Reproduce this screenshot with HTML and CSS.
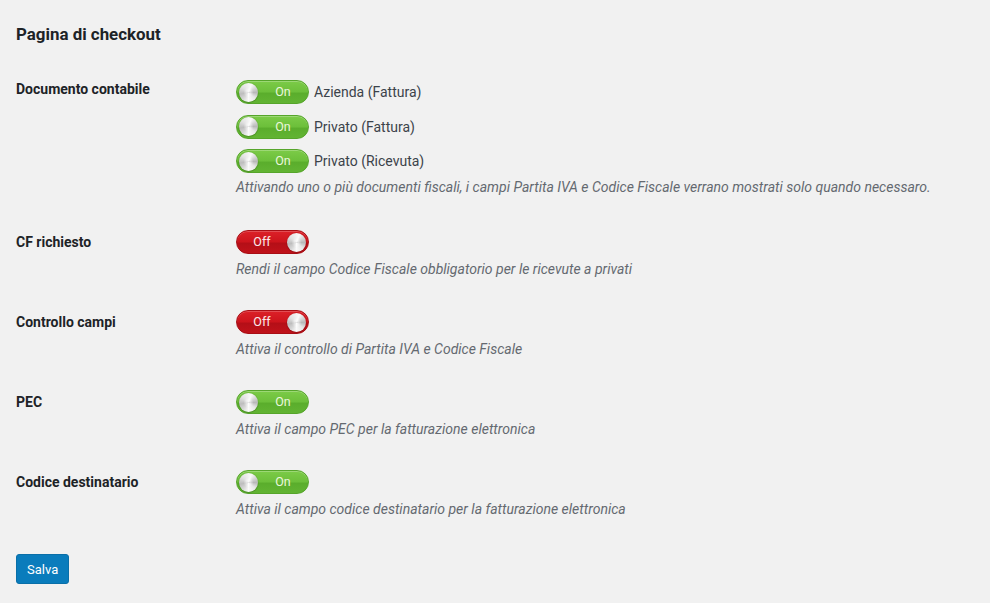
FILE: index.html
```html
<!DOCTYPE html>
<html lang="it">
<head>
<meta charset="utf-8">
<title>Pagina di checkout</title>
<link rel="stylesheet" href="styles.css">
</head>
<body>
<div class="wrap">
  <h2 class="title">Pagina di checkout</h2>
  <div class="form">
    <div class="row row-first">
      <div class="label">Documento contabile</div>
      <div class="field">
        <div class="options">
          <div class="opt"><span class="toggle on"><span class="knob"></span><span class="txt">On</span></span><span class="opt-label">Azienda (Fattura)</span></div>
          <div class="opt"><span class="toggle on"><span class="knob"></span><span class="txt">On</span></span><span class="opt-label">Privato (Fattura)</span></div>
          <div class="opt"><span class="toggle on"><span class="knob"></span><span class="txt">On</span></span><span class="opt-label">Privato (Ricevuta)</span></div>
        </div>
        <p class="desc">Attivando uno o più documenti fiscali, i campi Partita IVA e Codice Fiscale verrano mostrati solo quando necessaro.</p>
      </div>
    </div>
    <div class="row">
      <div class="label">CF richiesto</div>
      <div class="field">
        <div class="opt"><span class="toggle off"><span class="txt">Off</span><span class="knob"></span></span></div>
        <p class="desc">Rendi il campo Codice Fiscale obbligatorio per le ricevute a privati</p>
      </div>
    </div>
    <div class="row">
      <div class="label">Controllo campi</div>
      <div class="field">
        <div class="opt"><span class="toggle off"><span class="txt">Off</span><span class="knob"></span></span></div>
        <p class="desc">Attiva il controllo di Partita IVA e Codice Fiscale</p>
      </div>
    </div>
    <div class="row">
      <div class="label">PEC</div>
      <div class="field">
        <div class="opt"><span class="toggle on"><span class="knob"></span><span class="txt">On</span></span></div>
        <p class="desc">Attiva il campo PEC per la fatturazione elettronica</p>
      </div>
    </div>
    <div class="row">
      <div class="label">Codice destinatario</div>
      <div class="field">
        <div class="opt"><span class="toggle on"><span class="knob"></span><span class="txt">On</span></span></div>
        <p class="desc">Attiva il campo codice destinatario per la fatturazione elettronica</p>
      </div>
    </div>
  </div>
  <button class="btn" type="button">Salva</button>
</div>
</body>
</html>
```

FILE: styles.css
```css
html, body {
  margin: 0;
  padding: 0;
  background: #f1f1f1;
}
body {
  font-family: Roboto, "Liberation Sans", sans-serif;
  color: #3c434a;
  font-size: 14px;
}
.wrap {
  padding: 0 16px;
}
.title {
  margin: 0;
  padding-top: 24px;
  font-size: 16.9px;
  line-height: 20px;
  font-weight: 700;
  color: #1d2327;
}
.form {
  padding-top: 16px;
}
.row {
  display: flex;
  height: 80px;
  box-sizing: border-box;
}
.row-first {
  height: 153px;
}
.label {
  width: 220px;
  flex: none;
  padding-top: 20px;
  line-height: 18px;
  font-weight: 700;
  color: #1d2327;
}
.field {
  padding-top: 15px;
}
.row-first .field {
  padding-top: 18px;
}
.options {
  display: flex;
  flex-direction: column;
  gap: 6.5px;
}
.opt {
  display: flex;
  align-items: center;
  height: 28px;
}
.opt-label {
  margin-left: 5px;
  color: #3c434a;
}
.desc {
  margin: 4px 0 0;
  line-height: 19px;
  font-style: italic;
  color: #646970;
}
.row-first .desc {
  margin-top: 3px;
}
.toggle {
  width: 73px;
  height: 24px;
  box-sizing: border-box;
  border-radius: 12px;
  display: flex;
  align-items: center;
  padding: 0 2px;
  font-size: 12.5px;
  color: #fff;
}
.toggle.on {
  background: linear-gradient(#7ccb48 0%, #6cbf3a 50%, #5aad2c 55%, #62b433 100%);
  border: 1px solid #56a52b;
  box-shadow: inset 0 1px 0 rgba(255,255,255,0.25);
}
.toggle.off {
  background: linear-gradient(#dc2128 0%, #cc141c 50%, #b40f17 55%, #c0121a 100%);
  border: 1px solid #a80e15;
  box-shadow: inset 0 1px 0 rgba(255,255,255,0.2);
}
.toggle .txt {
  flex: 1;
  text-align: center;
  line-height: 14px;
}
.toggle.on .txt {
  color: #eaf7dc;
  padding-left: 2px;
}
.toggle.off .txt {
  color: #fbe9ea;
  padding-right: 2px;
}
.knob {
  width: 19px;
  height: 19px;
  border-radius: 50%;
  flex: none;
  background:
    radial-gradient(circle at 50% 50%, rgba(255,255,255,0.5) 0 2px, rgba(255,255,255,0) 5px),
    conic-gradient(from 20deg, #fafafa 0deg, #d2d2d2 40deg, #b8b8b8 70deg, #e6e6e6 110deg, #fafafa 160deg, #d6d6d6 200deg, #bdbdbd 240deg, #e2e2e2 290deg, #fafafa 360deg);
  box-shadow: 0 0 0 1px rgba(0,0,0,0.06), 0 1px 1px rgba(0,0,0,0.15);
}
.btn {
  margin-top: 21px;
  background: #0a7cbc;
  color: #fff;
  border: 1px solid #0a6fa8;
  border-radius: 3px;
  font-family: Roboto, "Liberation Sans", sans-serif;
  font-size: 13px;
  height: 30px;
  padding: 0 10px;
  cursor: pointer;
}
```
